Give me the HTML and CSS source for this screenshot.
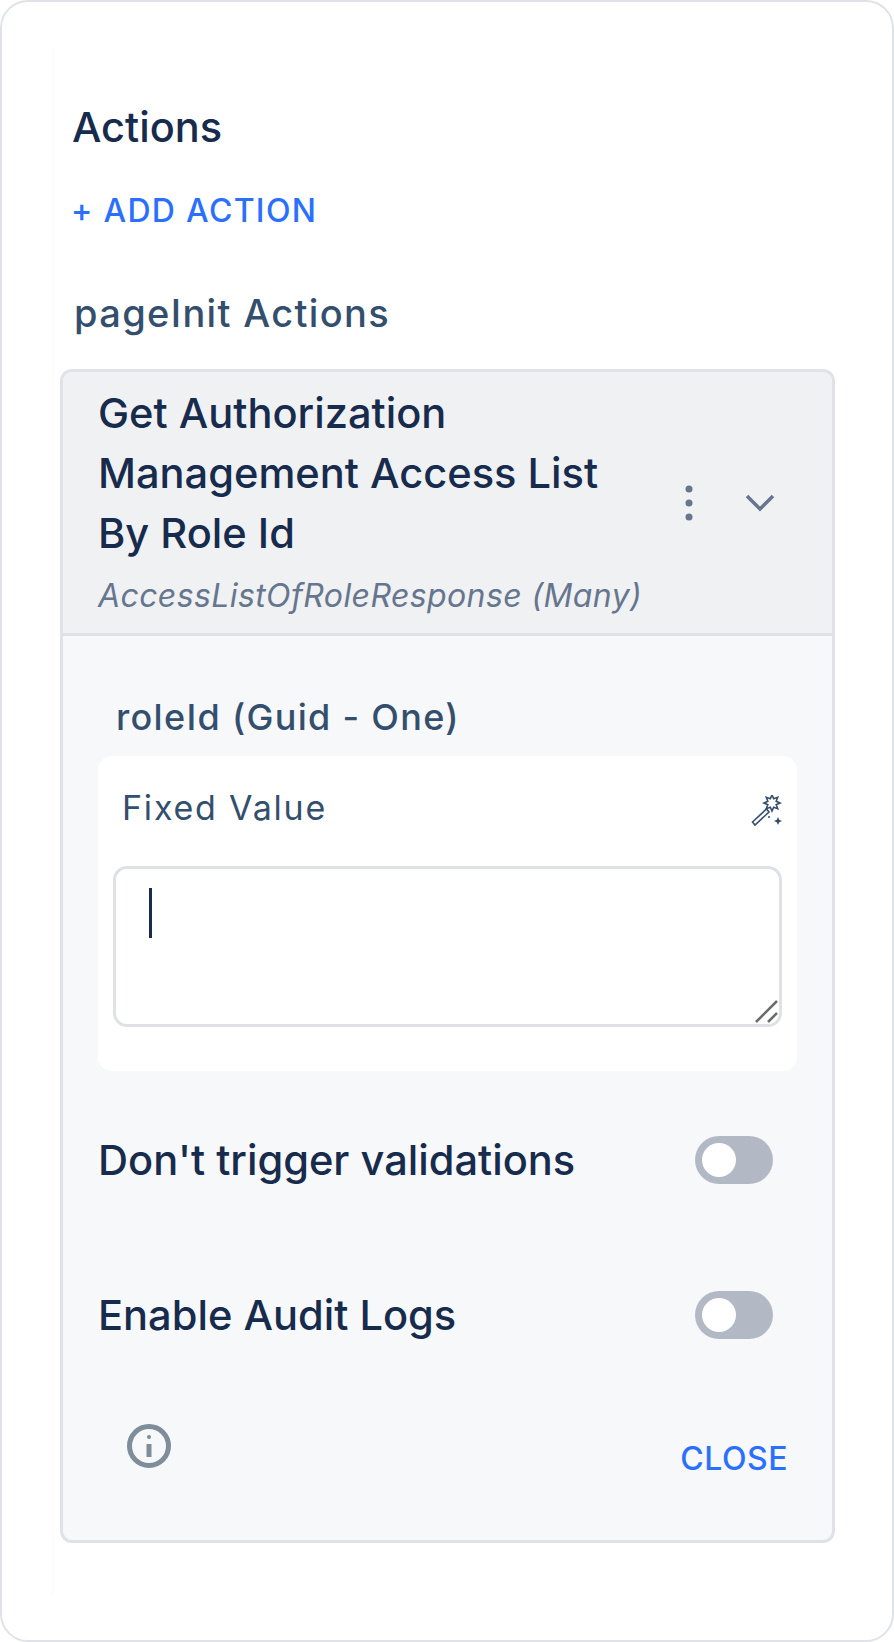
FILE: index.html
```html
<!DOCTYPE html>
<html lang="en">
<head>
<meta charset="UTF-8">
<title>Actions</title>
<link rel="stylesheet" href="styles.css">
</head>
<body>
<div class="frame">
  <div class="panel">
    <h2 class="title">Actions</h2>
    <a class="add-action">+ ADD ACTION</a>
    <h3 class="group-title">pageInit Actions</h3>

    <div class="card">
      <div class="card-head">
        <div class="head-text">
          <div class="action-name">Get Authorization Management Access List By Role Id</div>
          <div class="action-type">AccessListOfRoleResponse (Many)</div>
        </div>
        <svg class="kebab" width="8" height="36" viewBox="0 0 8 36"><circle cx="4" cy="4" r="3.5"/><circle cx="4" cy="18" r="3.5"/><circle cx="4" cy="32" r="3.5"/></svg>
        <svg class="chevron" width="30" height="18" viewBox="0 0 30 18"><path d="M2 2l13 13L28 2"/></svg>
      </div>

      <div class="card-body">
        <div class="param-label">roleId (Guid - One)</div>
        <div class="param-box">
          <div class="param-top">
            <span class="fixed-label">Fixed Value</span>
            <!-- magic wand -->
            <svg class="wand" width="34" height="34" viewBox="0 0 34 34">
              <path d="M1.500 27l2.500 3 14-13-2.500-3z"/>
              <path d="M29 8l-3.800 1.700 1.500 4-4-1.500L21 16l-1.700-3.800-4 1.500 1.500-4L13 8l3.800-1.700-1.500-4 4 1.500L21 0l1.700 3.800 4-1.500-1.500 4z"/>
              <path class="solid" d="M27 22l1.200 2.800L31 26l-2.800 1.200L27 30l-1.200-2.800L23 26l2.800-1.200z"/>
              <circle class="solid" cx="18" cy="22" r="1"/>
            </svg>
          </div>
          <div class="fake-input">
            <span class="caret"></span>
            <svg class="grip" width="24" height="24" viewBox="0 0 24 24"><path d="M2 23L23 2M14 23l9-9"/></svg>
          </div>
        </div>

        <div class="switch-row">
          <span>Don't trigger validations</span>
          <span class="switch"><span class="knob"></span></span>
        </div>
        <div class="switch-row">
          <span>Enable Audit Logs</span>
          <span class="switch"><span class="knob"></span></span>
        </div>

        <div class="card-foot">
          <svg class="info" width="44" height="44" viewBox="0 0 44 44">
            <circle cx="22" cy="22" r="19.500"/>
            <path d="M22 20v13"/>
            <circle class="dot" cx="22" cy="13" r="2"/>
          </svg>
          <a class="close-btn">CLOSE</a>
        </div>
      </div>
    </div>
  </div>
</div>
</body>
</html>
```

FILE: styles.css
```css
* {
  box-sizing: border-box;
}
body {
  margin: 0;
  background: #fff;
  font-family: 'Inter', Arial, sans-serif;
  color: #172b4d;
}
.frame {
  width: 894px;
  height: 1642px;
  padding: 46px 58px 46px 50px;
  border: 2px solid #dfe3e8;
  border-radius: 28px;
  background: #fff;
}
.panel {
  height: 100%;
  padding: 56px 0 0 18px;
  border-left: 2px solid #fbfbfc;
}
.title {
  margin: 0;
  font-size: 41.500px;
  line-height: 46px;
  font-weight: 450;
  color: #172b4d;
}
.add-action {
  display: block;
  margin: 41px 0 0 -1px;
  font-size: 32px;
  line-height: 40px;
  font-weight: 450;
  letter-spacing: 1.300px;
  color: #2b6fff;
}
.group-title {
  margin: 60px 0 0 2px;
  font-size: 38px;
  line-height: 44px;
  font-weight: 450;
  letter-spacing: 1.350px;
  color: #344f6e;
}
.card {
  width: 775px;
  height: 1174px;
  margin: 34px 0 0 -12px;
  border: 3px solid #e0e2e8;
  border-radius: 12px;
  overflow: hidden;
  background: #f7f8fa;
}
.card-head {
  display: flex;
  align-items: center;
  height: 264px;
  padding: 0 0 0 35px;
  background: #f0f1f3;
  border-bottom: 3px solid #dfe1e6;
}
.head-text {
  width: 520px;
  margin-top: -3px;
}
.action-name {
  font-size: 41.600px;
  line-height: 60px;
  font-weight: 450;
  color: #172b4d;
}
.action-type {
  margin-top: 9px;
  width: 570px;
  font-size: 32px;
  line-height: 48px;
  font-style: italic;
  letter-spacing: 0.4px;
  color: #66768f;
  white-space: nowrap;
}
.kebab {
  margin-left: 67px;
  fill: #66768f;
}
.chevron {
  margin-left: 52px;
  fill: none;
  stroke: #66768f;
  stroke-width: 3.500;
}
.card-body {
  padding: 58px 35px 0;
}
.param-label {
  margin-left: 18px;
  font-size: 36px;
  line-height: 46px;
  font-weight: 450;
  letter-spacing: 1.300px;
  color: #344f6e;
}
.param-box {
  height: 315px;
  margin-top: 16px;
  padding: 28px 15px 0;
  background: #fff;
  border-radius: 14px;
}
.param-top {
  display: flex;
  justify-content: space-between;
  align-items: center;
  height: 46px;
  padding-left: 9px;
}
.fixed-label {
  font-size: 34px;
  letter-spacing: 1.800px;
  color: #344f6e;
}
.wand {
  margin: 10px -3px 0 0;
  fill: none;
  stroke: #344f6e;
  stroke-width: 1.600;
}
.wand .solid {
  fill: #344f6e;
  stroke: none;
}
.fake-input {
  position: relative;
  height: 161px;
  margin-top: 36px;
  border: 3px solid #dfe1e6;
  border-radius: 14px;
  background: #fff;
}
.caret {
  position: absolute;
  left: 33px;
  top: 19px;
  width: 3px;
  height: 50px;
  background: #172b4d;
}
.grip {
  position: absolute;
  right: 1px;
  bottom: 1px;
  fill: none;
  stroke: #6b6b6b;
  stroke-width: 2.500;
}
.switch-row {
  display: flex;
  justify-content: space-between;
  align-items: center;
  height: 48px;
  margin-top: 65px;
  padding-right: 24px;
  font-size: 41.600px;
  font-weight: 450;
  color: #172b4d;
}
.switch-row + .switch-row {
  margin-top: 107px;
}
.switch {
  display: flex;
  align-items: center;
  width: 78px;
  height: 48px;
  padding: 7px;
  border-radius: 24px;
  background: #b3b9c4;
}
.knob {
  width: 34px;
  height: 34px;
  border-radius: 50%;
  background: #fff;
}
.card-foot {
  display: flex;
  justify-content: space-between;
  align-items: flex-start;
  margin-top: 85px;
  padding: 0 9px 0 29px;
}
.info {
  fill: none;
  stroke: #7f8c99;
  stroke-width: 5;
}
.info .dot {
  fill: #7f8c99;
  stroke: none;
}
.close-btn {
  margin-top: 15px;
  font-size: 32px;
  line-height: 40px;
  font-weight: 450;
  letter-spacing: 0.5px;
  color: #2b6fff;
}
```
